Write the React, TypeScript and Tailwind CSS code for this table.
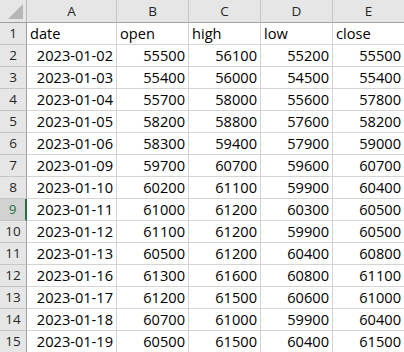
import React from "react";

const rows: [string, number, number, number, number][] = [
  ["2023-01-02", 55500, 56100, 55200, 55500],
  ["2023-01-03", 55400, 56000, 54500, 55400],
  ["2023-01-04", 55700, 58000, 55600, 57800],
  ["2023-01-05", 58200, 58800, 57600, 58200],
  ["2023-01-06", 58300, 59400, 57900, 59000],
  ["2023-01-09", 59700, 60700, 59600, 60700],
  ["2023-01-10", 60200, 61100, 59900, 60400],
  ["2023-01-11", 61000, 61200, 60300, 60500],
  ["2023-01-12", 61100, 61200, 59900, 60500],
  ["2023-01-13", 60500, 61200, 60400, 60800],
  ["2023-01-16", 61300, 61600, 60800, 61100],
  ["2023-01-17", 61200, 61500, 60600, 61000],
  ["2023-01-18", 60700, 61000, 59900, 60400],
  ["2023-01-19", 60500, 61500, 60400, 61500],
];

const cols = ["A", "B", "C", "D", "E"];
const widths = ["w-[90px]", "w-[72px]", "w-[72px]", "w-[72px]", "w-[72px]"];
const headerRow = ["date", "open", "high", "low", "close"];

export default function App() {
  const font = { fontFamily: '"Open Sans", "Liberation Sans", Arial, sans-serif' };
  return (
    <div className="w-[404px] h-[352px] overflow-hidden bg-white text-black" style={font}>
      <div className="flex w-[405px]">
        <div className="relative w-[27px] h-[23px] shrink-0 bg-[#e6e6e6] border-r border-b border-r-[#bcbcbc] border-b-[#9f9f9f]">
          <div className="absolute right-[3px] bottom-[3px] w-0 h-0 border-l-[15px] border-l-transparent border-b-[15px] border-b-[#b7b7b7]" />
        </div>
        {cols.map((c, i) => (
          <div
            key={c}
            className={`${widths[i]} shrink-0 h-[23px] bg-[#e6e6e6] border-r border-b border-r-[#c6c6c6] border-b-[#9f9f9f] flex items-center justify-center text-[13.5px] text-[#262626]`}
          >
            {c}
          </div>
        ))}
      </div>
      {[headerRow, ...rows].map((r, ri) => {
        const n = ri + 1;
        const sel = n === 9;
        return (
          <div key={ri} className="flex w-[405px]">
            <div
              className={`w-[27px] h-[22px] shrink-0 border-b border-b-[#c6c6c6] flex items-end justify-center pb-[1px] text-[13.5px] leading-[19px] ${
                sel
                  ? "bg-[#d2d2d2] border-r-2 border-r-[#217346] text-[#217346]"
                  : "bg-[#e6e6e6] border-r border-r-[#9f9f9f] text-[#262626]"
              }`}
            >
              {n}
            </div>
            {r.map((v, ci) => (
              <div
                key={ci}
                className={`${widths[ci]} shrink-0 h-[22px] border-r border-b border-[#d4d4d4] flex items-end pb-[1px] text-[14.6px] leading-[19px] ${
                  ri === 0 ? "justify-start pl-[3px]" : "justify-end pr-[3px]"
                }`}
              >
                {v}
              </div>
            ))}
          </div>
        );
      })}
    </div>
  );
}
